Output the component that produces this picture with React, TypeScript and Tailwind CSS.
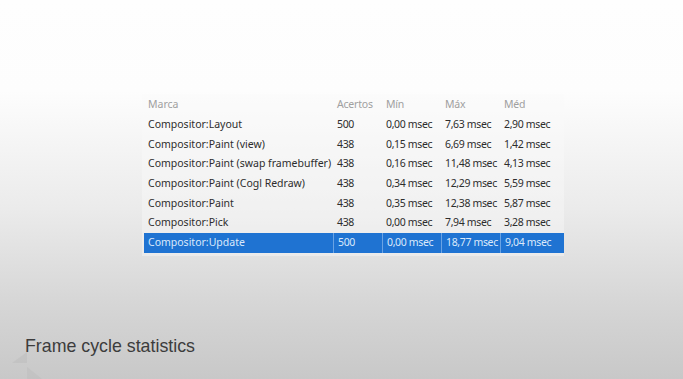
const rows = [
  ["Compositor:Layout", "500", "0,00 msec", "7,63 msec", "2,90 msec"],
  ["Compositor:Paint (view)", "438", "0,15 msec", "6,69 msec", "1,42 msec"],
  ["Compositor:Paint (swap framebuffer)", "438", "0,16 msec", "11,48 msec", "4,13 msec"],
  ["Compositor:Paint (Cogl Redraw)", "438", "0,34 msec", "12,29 msec", "5,59 msec"],
  ["Compositor:Paint", "438", "0,35 msec", "12,38 msec", "5,87 msec"],
  ["Compositor:Pick", "438", "0,00 msec", "7,94 msec", "3,28 msec"],
  ["Compositor:Update", "500", "0,00 msec", "18,77 msec", "9,04 msec"],
];

const headers = ["Marca", "Acertos", "Mín", "Máx", "Méd"];
const colW = ["w-[189px]", "w-[49px]", "w-[59px]", "w-[59px]", "w-[62px]"];

export default function App() {
  return (
    <div className="relative flex h-[379px] w-[683px] flex-col overflow-hidden bg-[linear-gradient(180deg,#fefefe_0%,#fdfdfd_24%,#ebebeb_55%,#d6d6d6_80%,#c8c8c8_100%)] font-['Noto_Sans',sans-serif]">
      <div className="flex pl-[142px] pt-[94px]">
        <div className="flex w-[422px] flex-col bg-[#fbfbfb]/40 pb-[3px] pl-[2px]">
          <div className="flex h-[21px] items-center pt-[1px] text-[10.5px] text-[#a0a0a0]">
            {headers.map((h, i) => (
              <div key={h} className={`${colW[i]} pl-[4px] ${i > 0 ? "tracking-[-0.2px]" : ""}`}>{h}</div>
            ))}
          </div>
          {rows.map((r, ri) => {
            const sel = ri === rows.length - 1;
            return (
              <div
                key={r[0]}
                className={`flex h-[19.7px] items-center text-[10.5px] ${sel ? "bg-[#1f73d2] text-[#dbe9fb]" : "text-[#2d2d2d]"}`}
              >
                {r.map((c, i) => (
                  <div
                    key={i}
                    className={`flex h-full items-center whitespace-nowrap pl-[4px] ${colW[i]} ${i > 0 ? "tracking-[-0.35px]" : ""} ${sel && i > 0 ? "border-l border-[#6aa3e4]" : ""}`}
                  >
                    {c}
                  </div>
                ))}
              </div>
            );
          })}
        </div>
      </div>
      <div className="mt-auto flex pb-[23px] pl-[25px]">
        <div className="text-[17.8px] leading-none text-[#3c3c3c] font-['Liberation_Sans',sans-serif]">
          Frame cycle statistics
        </div>
      </div>
      <svg className="absolute bottom-0 left-0" width="50" height="30" viewBox="0 0 50 30">
        <polygon points="27,3 27,14 12,14" fill="#bdbdbd" opacity="0.55" />
        <polygon points="27,18 27,30 42,30" fill="#bdbdbd" opacity="0.55" />
      </svg>
    </div>
  );
}
